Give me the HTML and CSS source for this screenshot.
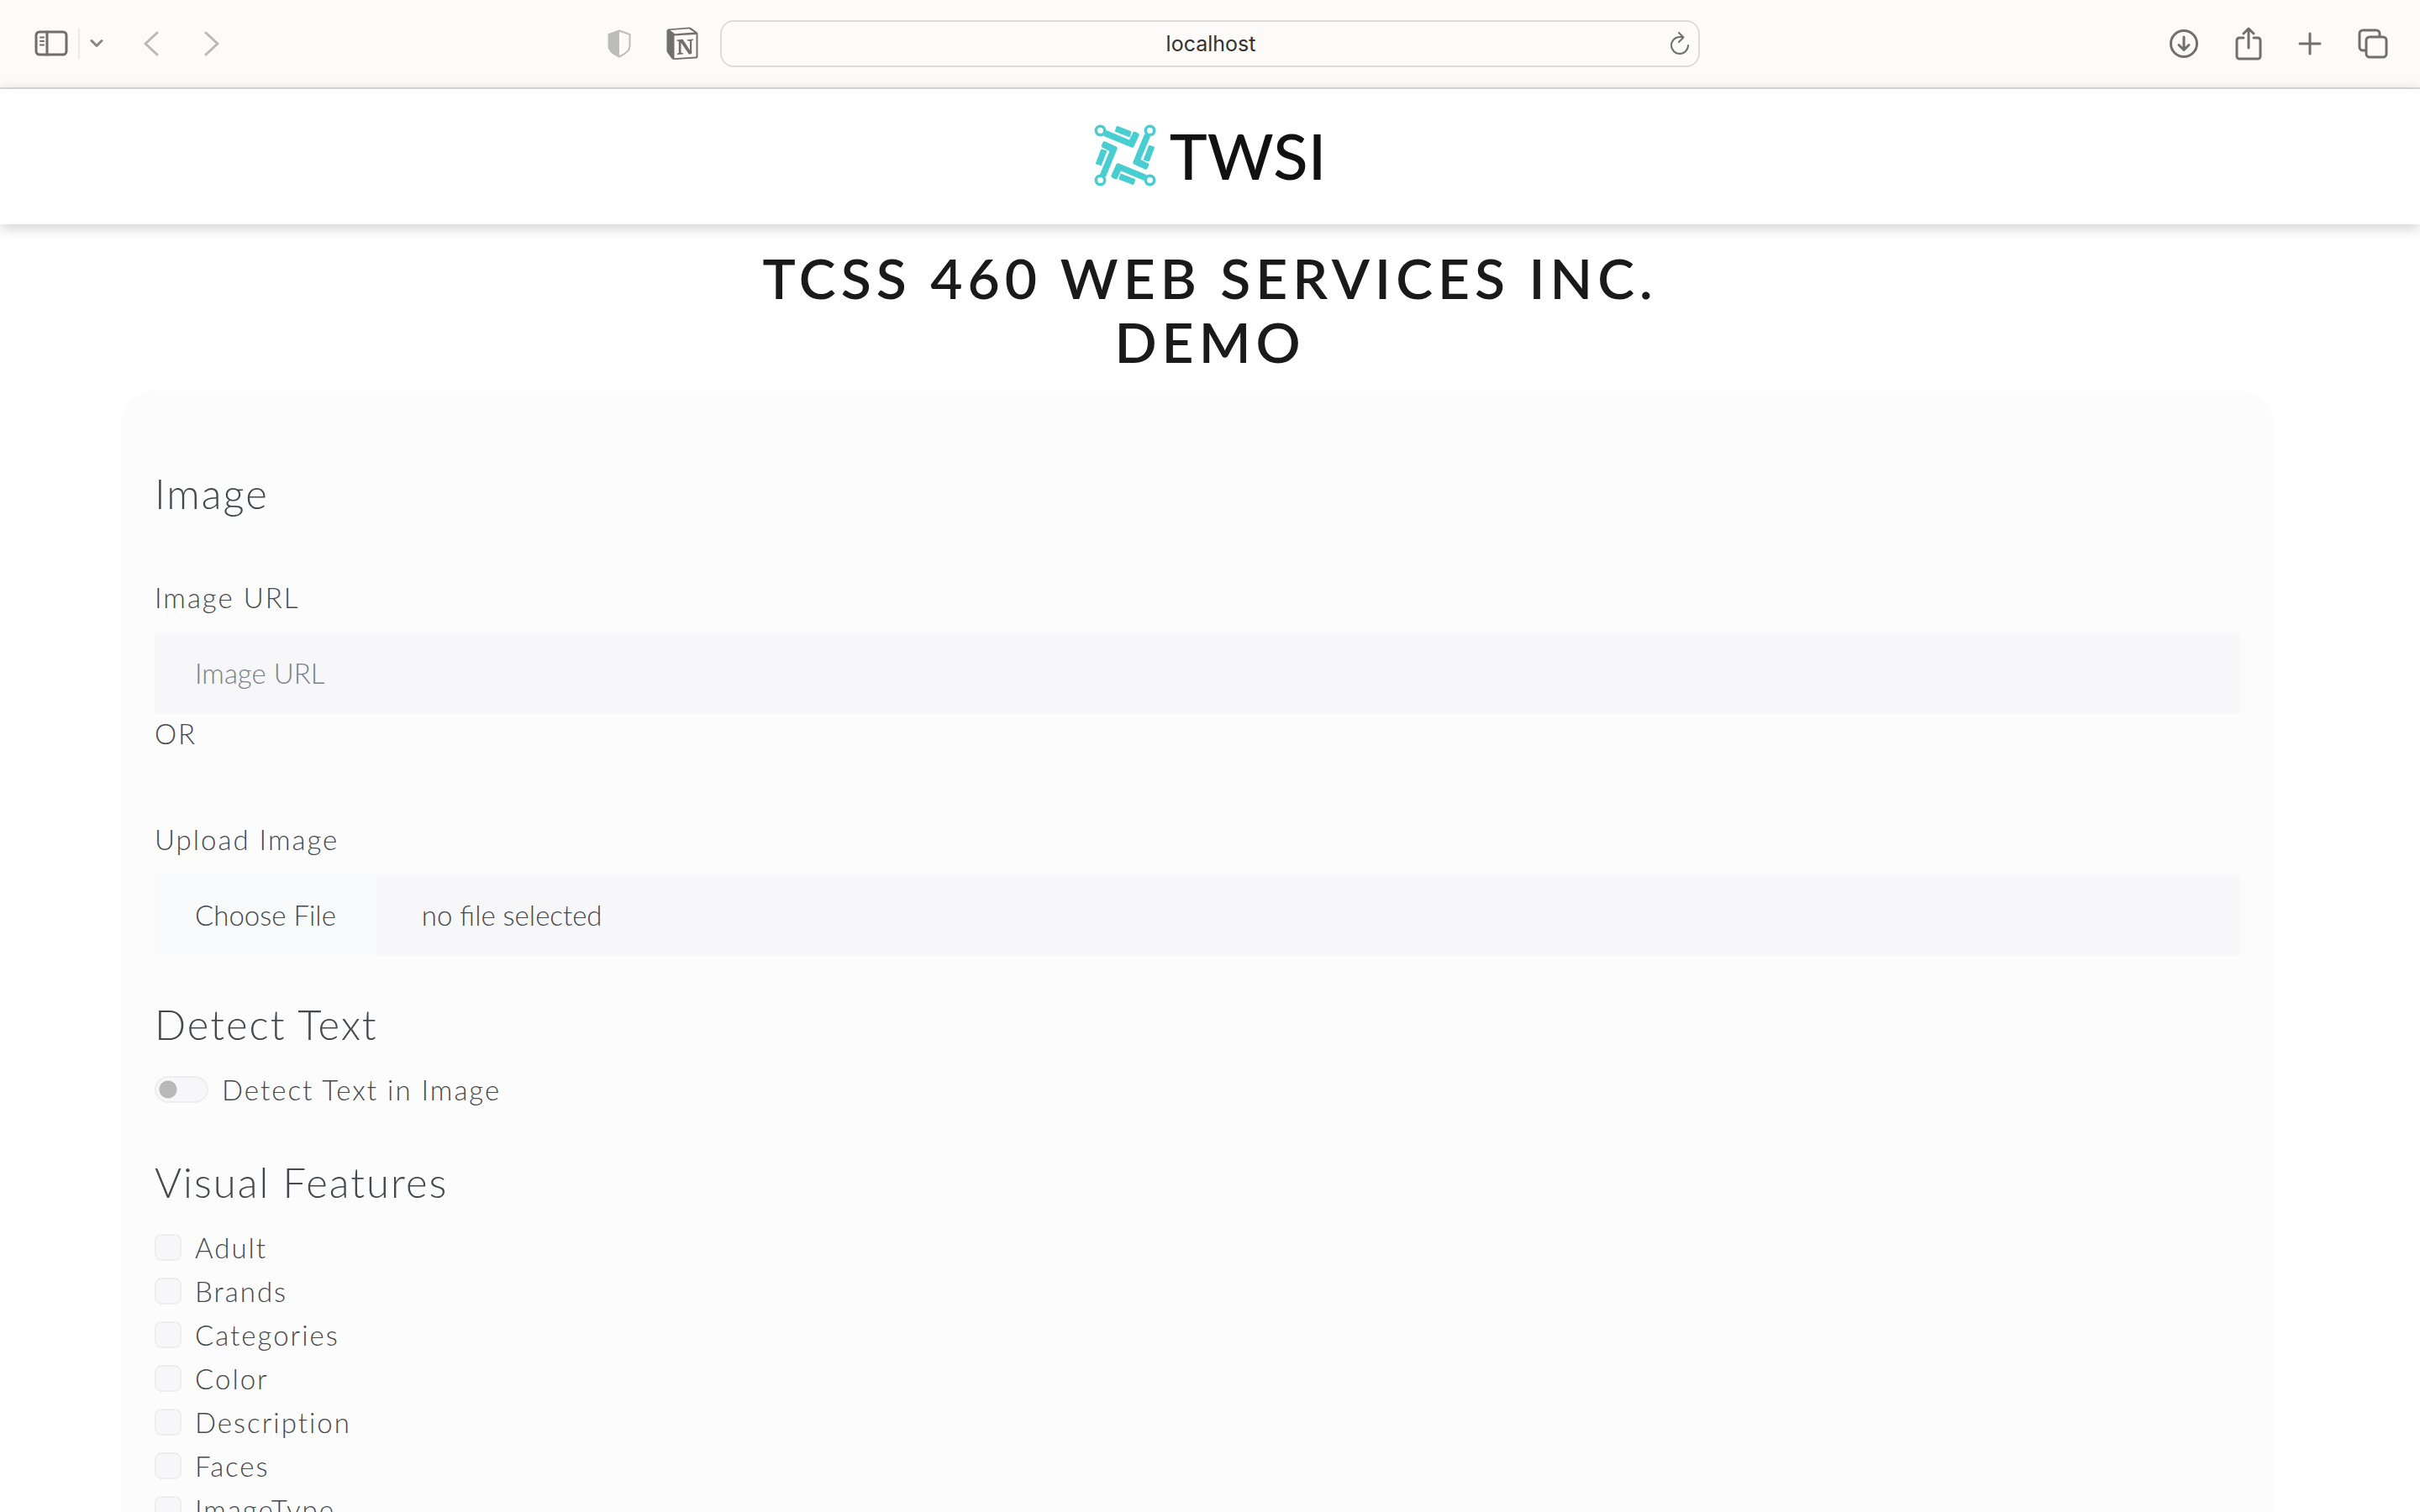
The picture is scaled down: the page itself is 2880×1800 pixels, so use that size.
FILE: index.html
```html
<!DOCTYPE html>
<html lang="en">
<head>
<meta charset="utf-8">
<title>TWSI Demo</title>
<link rel="stylesheet" href="styles.css">
</head>
<body>
<div class="browser-bar">
  <div class="bar-side bar-left">
    <div class="tool-group">
      <button class="tool" type="button" aria-label="Sidebar"><svg width="40" height="32" viewBox="0 0 40 32" fill="none" stroke="#6e6e6c" stroke-width="3" stroke-linecap="round"><rect x="2" y="2" width="36" height="27" rx="4"/><path d="M15 2v27"/><path stroke-width="2" d="M7 8.500h4M7 13h4M7 17.500h4"/></svg></button>
      <span class="tool-divider"></span>
      <button class="tool" type="button" aria-label="Tab groups"><svg width="16" height="12" viewBox="0 0 16 12" fill="none" stroke="#868689" stroke-width="3" stroke-linecap="round" stroke-linejoin="round"><path d="M2 2.500l6 6 6-6"/></svg></button>
    </div>
    <div class="tool-group nav-group">
      <button class="tool" type="button" aria-label="Back"><svg width="18" height="30" viewBox="0 0 18 30" fill="none" stroke="#b9b9b7" stroke-width="3" stroke-linecap="round" stroke-linejoin="round"><path d="M16 2L2 15l14 13"/></svg></button>
      <button class="tool" type="button" aria-label="Forward"><svg width="18" height="30" viewBox="0 0 18 30" fill="none" stroke="#b9b9b7" stroke-width="3" stroke-linecap="round" stroke-linejoin="round"><path d="M2 2l14 13L2 28"/></svg></button>
    </div>
    <div class="tool-group ext-group">
      <button class="tool" type="button" aria-label="Privacy report"><svg width="28" height="34" viewBox="0 0 28 34"><path d="M14 1.500L26.500 6v14c0 6-7 10-12.500 12.500C8.500 30 1.500 26 1.500 20V6z" fill="none" stroke="#bcbcba" stroke-width="2"/><path d="M14 1L1 6v14c0 6.500 7 11 13 13z" fill="#bcbcba"/></svg></button>
      <button class="tool" type="button" aria-label="Notion"><svg width="38" height="40" viewBox="0 0 38 40"><path d="M3 2.500L27 .500c1 0 2 .200 3 1l6 4.500c1 .800 1.500 1.500 1.500 3v26c0 2-1 2.500-2.500 2.500l-25 1.500c-2 .200-3-.500-4-1.700L1.500 31C.700 30 .500 29.200.500 28V5c0-1.500 1-2.300 2.500-2.500z" fill="#70706e"/><path d="M4.500 4l22.500-1.700 6.500 4.200-23.500 1.700z M9.500 10.500l26-1.500v26.500l-26 1.700z" fill="#fcfbf9"/><path d="M12.500 15.500l7-.700 8.500 13V17l-3-.500v-1.300l7-.700v1.300l-1.800.700V32l-3.200.700-9.500-14v12l2.500.500v1.300l-7 .500v-1.300l1.800-.700V17.300l-2.300-.500z" fill="#70706e"/></svg></button>
    </div>
  </div>
  <div class="address">
    <input class="address-input" type="text" aria-label="Address" value="localhost">
    <button class="tool reload" type="button" aria-label="Reload"><svg width="24" height="28" viewBox="0 0 24 28" fill="none" stroke="#70706e" stroke-width="2" stroke-linecap="round" stroke-linejoin="round"><path d="M22 16a10 10 0 1 1-10-10h4M11 1l5.500 5.500L11 12"/></svg></button>
  </div>
  <div class="bar-side bar-right">
    <button class="tool" type="button" aria-label="Downloads"><svg width="36" height="36" viewBox="0 0 36 36" fill="none" stroke="#70706e" stroke-width="3" stroke-linecap="round" stroke-linejoin="round"><circle cx="18" cy="18" r="15.500"/><path d="M18 10v15M12 19.500l6 6 6-6"/></svg></button>
    <button class="tool" type="button" aria-label="Share"><svg width="32" height="40" viewBox="0 0 32 40" fill="none" stroke="#70706e" stroke-width="3" stroke-linecap="round" stroke-linejoin="round"><path d="M10 13H5a3 3 0 0 0-3 3v19a3 3 0 0 0 3 3h22a3 3 0 0 0 3-3V16a3 3 0 0 0-3-3h-5M16 25V2M10 8l6-6 6 6"/></svg></button>
    <button class="tool" type="button" aria-label="New tab"><svg width="28" height="28" viewBox="0 0 28 28" fill="none" stroke="#70706e" stroke-width="3" stroke-linecap="round"><path d="M14 2v24M2 14h24"/></svg></button>
    <button class="tool" type="button" aria-label="Tab overview"><svg width="36" height="36" viewBox="0 0 36 36" fill="none" stroke="#70706e" stroke-width="3"><rect x="10" y="10" width="24" height="24" rx="4"/><path d="M10 26H6a4 4 0 0 1-4-4V6a4 4 0 0 1 4-4h16a4 4 0 0 1 4 4v4"/></svg></button>
  </div>
</div>

<header class="site-header">
  <a class="brand" href="#">
    <svg width="74" height="74" viewBox="0 0 74 74" aria-hidden="true">
      <defs><g id="arm"><circle cx="7.500" cy="7.500" r="5.200" fill="none" stroke="#48cdd0" stroke-width="3.500"/><path d="M14.500 7L42 18.500 46.500 9.500Q47.500 8 49.500 9L52.500 10.500Q54.500 11.500 53.500 13.500L47.500 26.500Q46.500 28.500 44.500 27.500L11.500 14z" fill="#48cdd0"/><path d="M28 2L43.500 8Q45 8.600 44.300 10L42.500 15.500 25.500 9Q24.500 8.500 25 7.500L26.500 3Q27 1.600 28 2z" fill="#48cdd0"/></g></defs>
      <use href="#arm"/><use href="#arm" transform="rotate(90 37 37)"/><use href="#arm" transform="rotate(180 37 37)"/><use href="#arm" transform="rotate(270 37 37)"/>
    </svg>
    <span class="brand-name">TWSI</span>
  </a>
</header>

<main class="page">
  <h1 class="title">TCSS 460 Web Services Inc. Demo</h1>
  <form class="panel">
    <h2 class="section-title">Image</h2>
    <div class="field first-field">
      <label class="field-label" for="image-url">Image URL</label>
      <input class="text-input" id="image-url" type="text" placeholder="Image URL">
      <p class="or">OR</p>
    </div>
    <div class="field">
      <label class="field-label" for="image-file">Upload Image</label>
      <div class="file-box">
        <button class="file-button" id="image-file" type="button">Choose File</button>
        <span class="file-name">no file selected</span>
      </div>
    </div>
    <h2 class="section-title">Detect Text</h2>
    <label class="check"><input class="switch" type="checkbox" role="switch">Detect Text in Image</label>
    <h2 class="section-title features-title">Visual Features</h2>
    <div class="checks">
      <label class="check"><input class="box" type="checkbox">Adult</label>
      <label class="check"><input class="box" type="checkbox">Brands</label>
      <label class="check"><input class="box" type="checkbox">Categories</label>
      <label class="check"><input class="box" type="checkbox">Color</label>
      <label class="check"><input class="box" type="checkbox">Description</label>
      <label class="check"><input class="box" type="checkbox">Faces</label>
      <label class="check"><input class="box" type="checkbox">ImageType</label>
    </div>
  </form>
</main>
</body>
</html>
```
FILE: styles.css
```css
* { box-sizing: border-box; }

html { height: 100%; overflow: hidden; }

body {
  margin: 0;
  height: 100%;
  overflow: hidden;
  background: #fff;
  color: #45494c;
  font: 300 33px/48px Lato, "Liberation Sans", sans-serif;
  letter-spacing: 2px;
}

button, input { font: inherit; color: inherit; border: 0; padding: 0; margin: 0; }

/* Browser toolbar */
.browser-bar {
  display: grid;
  grid-template-columns: 1fr 1166px 1fr;
  align-items: center;
  height: 106px;
  background: #fcfbf9;
  border-bottom: 2px solid #dcdcdb;
}

.bar-side, .tool-group { display: flex; align-items: center; }
.bar-left { padding: 0 26px 0 41px; }
.bar-right { justify-content: flex-end; gap: 43px; padding-right: 38px; }
.tool { display: flex; background: none; }
.tool-group { gap: 12px; }
.nav-group { gap: 54px; margin-left: 48px; }
.ext-group { gap: 42px; margin-left: auto; }
.tool-divider { width: 2px; height: 36px; background: #ebebea; }

.address {
  display: flex;
  align-items: center;
  height: 56px;
  padding: 0 10px 0 12px;
  border: 2px solid #dcdcda;
  border-radius: 16px;
}

.address-input {
  flex: 1;
  min-width: 0;
  padding-left: 24px;
  background: none;
  color: #333;
  font: 400 25px/36px Inter, sans-serif;
  letter-spacing: 0;
  text-align: center;
}

/* Site header */
.site-header {
  display: flex;
  justify-content: center;
  height: 161px;
  padding-top: 42px;
  box-shadow: 0 4px 16px rgba(0, 0, 0, .2);
}

.brand {
  display: flex;
  gap: 16px;
  height: 74px;
  align-items: center;
  color: #111;
  text-decoration: none;
}

.brand-name { font: 500 76px/74px Lato, sans-serif; letter-spacing: 0; }

/* Content */
.page { padding-top: 26px; }

.title {
  max-width: 1140px;
  margin: 0 auto;
  color: #1a1a1a;
  font-size: 66px;
  font-weight: 600;
  line-height: 76px;
  letter-spacing: 6px;
  text-align: center;
  text-transform: uppercase;
}

.panel {
  margin: 20px 174px 0 144px;
  padding: 92px 40px 40px;
  background: #fcfcfc;
  border-radius: 40px;
}

.section-title {
  margin: 0 0 22px;
  font-size: 49px;
  font-weight: 300;
  line-height: 60px;
  letter-spacing: 2px;
}

.field { display: flex; flex-direction: column; margin-bottom: 52px; }
.first-field { margin: 70px 0 78px; }
.field-label { margin-bottom: 18px; }

.text-input {
  height: 96px;
  padding: 0 48px;
  background: #f7f7f9;
  letter-spacing: 0;
}

.text-input::placeholder { color: #7c8082; opacity: 1; }
.or { margin: 0; }

.file-box {
  display: flex;
  height: 96px;
  align-items: center;
  background: #f7f7f9;
  letter-spacing: 0;
}

.file-button { height: 96px; padding: 0 48px; background: #f9fafc; }
.file-name { padding-left: 54px; }

.check { display: flex; align-items: center; gap: 16px; min-height: 52px; }
.checks { display: flex; flex-direction: column; }
.features-title { margin-top: 54px; }

.box, .switch {
  appearance: none;
  width: 32px;
  height: 32px;
  background: #f7f7f9;
  border: 2px solid #eeeeef;
  border-radius: 8px;
}

.switch {
  width: 64px;
  border-radius: 16px;
  background: radial-gradient(circle at 14px 14px, #b9b9ba 10px, #f7f7f9 11px);
}
```
